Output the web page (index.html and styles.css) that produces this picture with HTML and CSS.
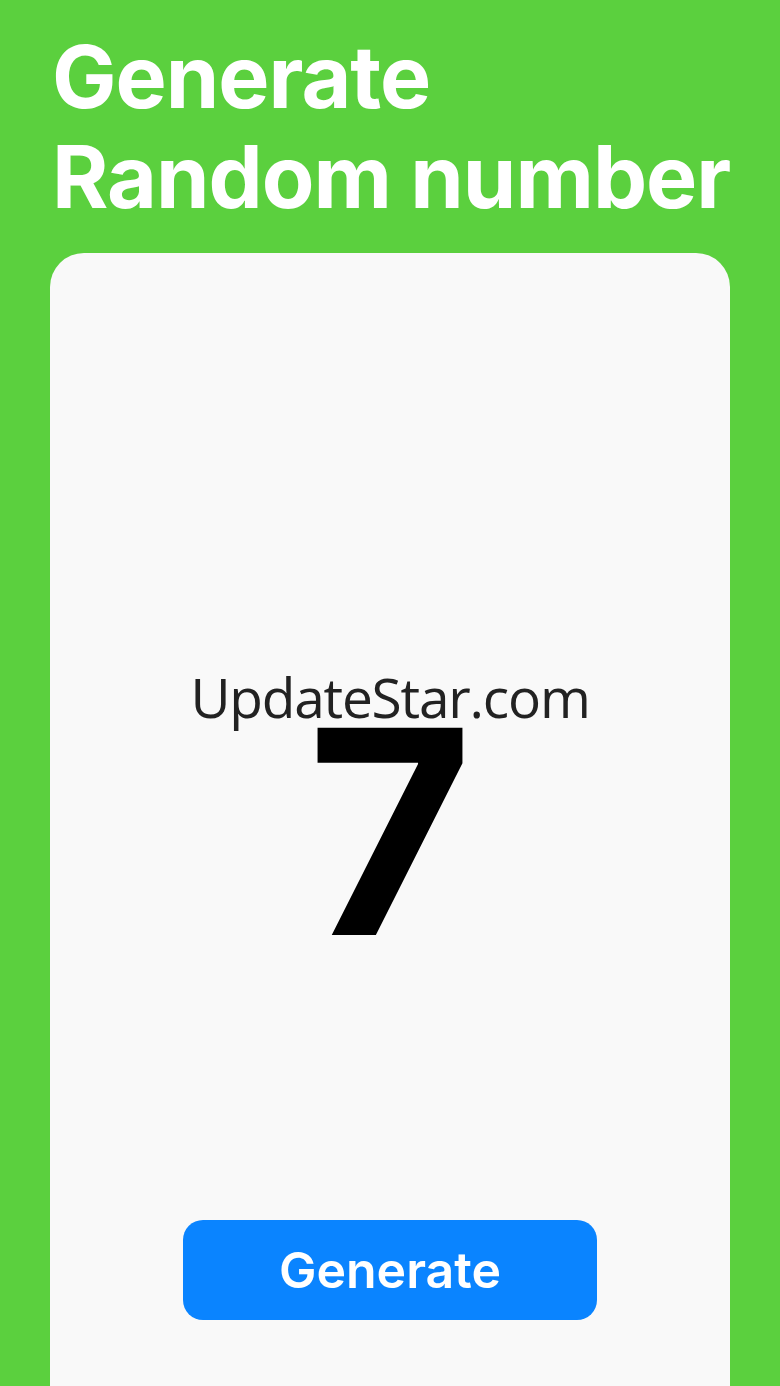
FILE: index.html
```html
<!DOCTYPE html>
<html>
<head>
<meta charset="utf-8">
<link rel="stylesheet" href="styles.css">
</head>
<body>
<main class="screen">
  <h1 class="title">Generate<br>Random number</h1>
  <section class="card">
    <div class="watermark">UpdateStar.com</div>
    <div class="number">7</div>
    <button class="btn">Generate</button>
  </section>
</main>
</body>
</html>
```
FILE: styles.css
```css
html, body {
  margin: 0;
  padding: 0;
  background: #5bd03e;
}
.screen {
  width: 780px;
  height: 1386px;
  overflow: hidden;
  display: flex;
  flex-direction: column;
}
.title {
  margin: 27px 0 26px 52px;
  font-family: Inter, "Liberation Sans", sans-serif;
  font-weight: 700;
  font-size: 86px;
  line-height: 100px;
  color: #ffffff;
  letter-spacing: -1px;
}
.card {
  position: relative;
  margin-left: 50px;
  width: 680px;
  flex: 1;
  background: #f9f9f9;
  border-radius: 34px 34px 0 0;
  display: flex;
  flex-direction: column;
  align-items: center;
}
.watermark {
  position: absolute;
  top: 416px;
  left: 0;
  right: 0;
  text-align: center;
  font-family: "Open Sans", "Noto Sans", sans-serif;
  font-size: 55px;
  letter-spacing: -1.2px;
  line-height: 1;
  color: #222222;
}
.number {
  margin-top: 436px;
  font-family: Inter, "Liberation Sans", sans-serif;
  font-weight: 700;
  font-size: 285px;
  line-height: 1;
  color: #000000;
}
.btn {
  margin-top: auto;
  margin-bottom: 66px;
  width: 414px;
  height: 100px;
  border: none;
  border-radius: 20px;
  background: #0a84ff;
  color: #ffffff;
  font-family: Inter, "Liberation Sans", sans-serif;
  font-weight: 600;
  font-size: 50px;
}
```
